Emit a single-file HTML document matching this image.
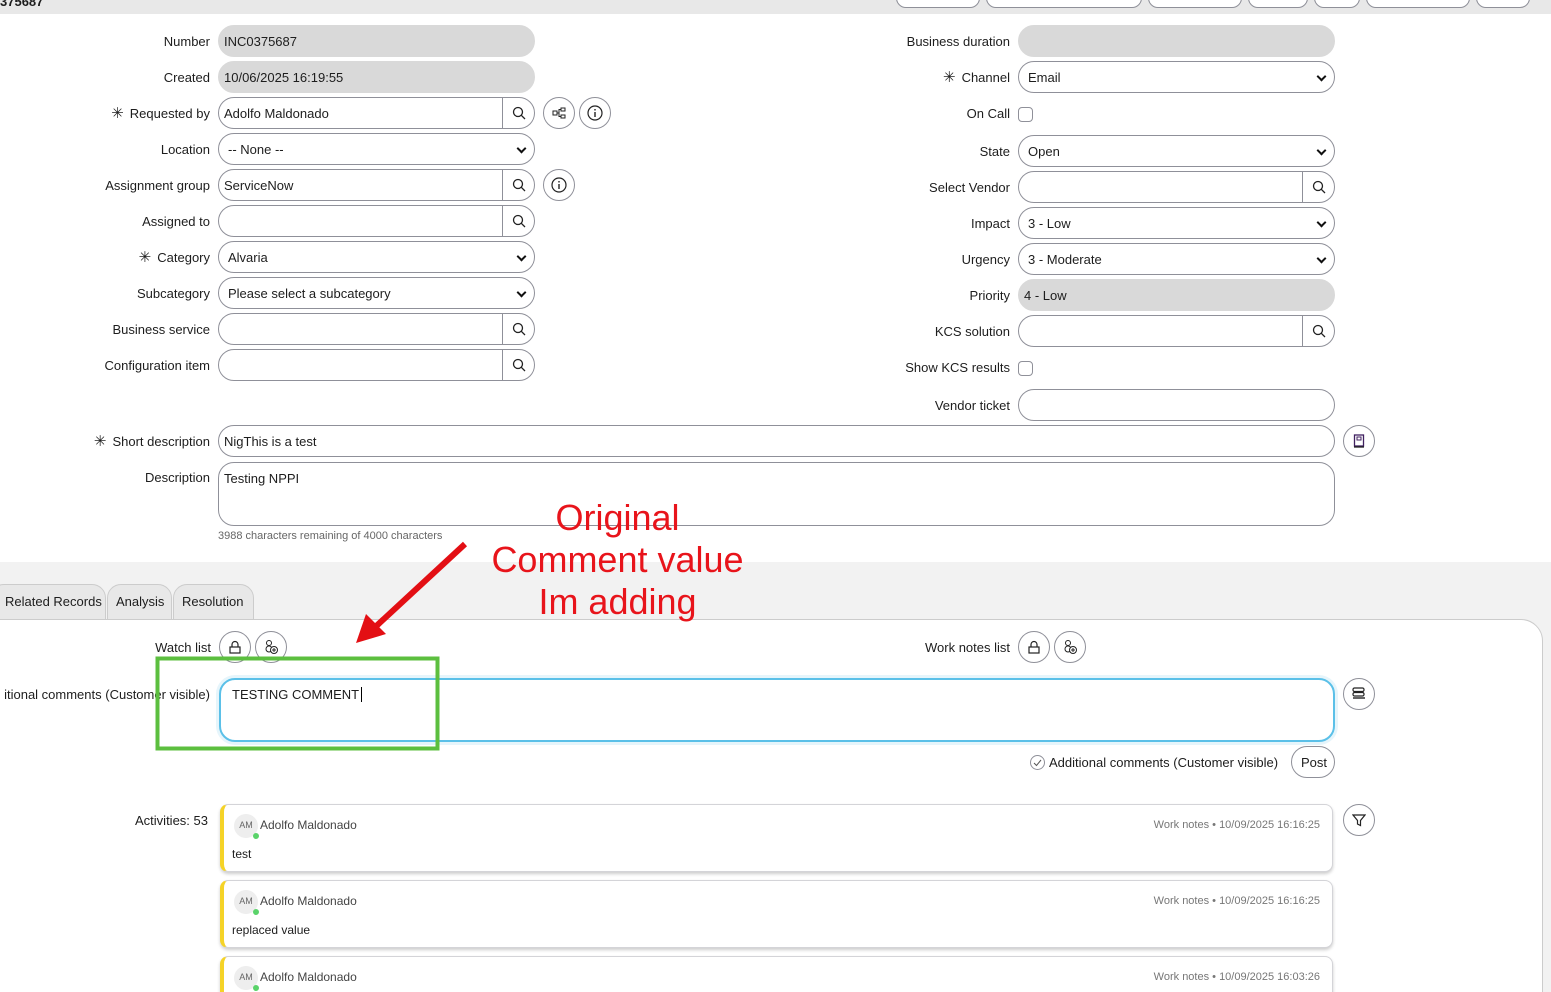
<!DOCTYPE html>
<html><head><meta charset="utf-8"><style>
*{box-sizing:border-box}
html,body{margin:0;width:1551px;height:992px;overflow:hidden}
body{background:#fff;font-family:"Liberation Sans",sans-serif;font-size:13px;color:#1d1d1d}
#w{position:relative;width:1551px;height:992px;overflow:hidden}
.a{position:absolute}
.lbl{position:absolute;text-align:right;white-space:nowrap;font-size:13px;line-height:16px}
.in{position:absolute;height:32px;border:1px solid #8f9099;border-radius:16px;background:#fff;padding:0 5px;line-height:31px;font-size:13px;white-space:nowrap}
.ro{background:#d9d9d9;border-color:#d9d9d9}
.sel::after{content:"";position:absolute;right:9px;top:11px;width:5px;height:5px;border-right:2px solid #111;border-bottom:2px solid #111;transform:rotate(45deg)}
.ref .mg{position:absolute;right:0;top:-1px;width:32px;height:32px;border-left:1px solid #8f9099}
.cb{position:absolute;width:15px;height:15px;border:1px solid #8f9099;border-radius:4px;background:#fff}
.cir{position:absolute;width:32px;height:32px;border:1px solid #8f9099;border-radius:50%;background:#fff}
.cir svg,.mg svg{position:absolute;left:50%;top:50%;transform:translate(-50%,-50%)}
.ast{font-size:15px;margin-right:6px}
.card{position:absolute;left:220px;width:1113px;height:68px;background:#fff;border:1px solid #d4d4d8;border-left:4px solid #f5d327;border-radius:8px;box-shadow:0 2px 3px rgba(0,0,0,.2)}
.av{position:absolute;left:10px;top:9px;width:24px;height:24px;border-radius:50%;background:#eee;font-size:9px;color:#666;text-align:center;line-height:22px}
.av::after{content:"";position:absolute;right:-1px;bottom:-1px;width:6px;height:6px;border-radius:50%;background:#5ad36a}
.nm{position:absolute;left:36px;top:13px;font-size:12px;color:#444}
.meta{position:absolute;right:12px;top:14px;font-size:11px;color:#777}
.tx{position:absolute;left:8px;top:42px;font-size:12px}
</style></head><body><div id="w">
<div class="a" style="left:0;top:0;width:1551px;height:14px;background:#e8e8e8"></div>
<div class="a" style="left:0;top:-6px;font-weight:bold;font-size:13px">375687</div>
<div class="a" style="left:896px;top:-12px;width:84px;height:20px;border:1px solid #8f9099;border-radius:10px;background:#fff"></div>
<div class="a" style="left:986px;top:-12px;width:156px;height:20px;border:1px solid #8f9099;border-radius:10px;background:#fff"></div>
<div class="a" style="left:1148px;top:-12px;width:94px;height:20px;border:1px solid #8f9099;border-radius:10px;background:#fff"></div>
<div class="a" style="left:1248px;top:-12px;width:60px;height:20px;border:1px solid #8f9099;border-radius:10px;background:#fff"></div>
<div class="a" style="left:1314px;top:-12px;width:46px;height:20px;border:1px solid #8f9099;border-radius:10px;background:#fff"></div>
<div class="a" style="left:1366px;top:-12px;width:104px;height:20px;border:1px solid #8f9099;border-radius:10px;background:#fff"></div>
<div class="a" style="left:1476px;top:-12px;width:54px;height:20px;border:1px solid #8f9099;border-radius:10px;background:#fff"></div>

<div class="lbl" style="right:1341px;top:34px">Number</div><div class="in ro" style="left:218px;top:25px;width:317px">INC0375687</div>
<div class="lbl" style="right:1341px;top:70px">Created</div><div class="in ro" style="left:218px;top:61px;width:317px">10/06/2025 16:19:55</div>
<div class="lbl" style="right:1341px;top:106px"><span class="ast">✳</span>Requested by</div><div class="in ref" style="left:218px;top:97px;width:317px">Adolfo Maldonado<div class="mg"><svg width="14" height="14"><circle cx="6" cy="6" r="4.5" fill="none" stroke="#222" stroke-width="1.3"/><path d="M9.3 9.3L13 13" stroke="#222" stroke-width="1.3"/></svg></div></div>
<div class="cir" style="left:543px;top:97px"><svg width="14" height="12"><rect x="1" y="4" width="4" height="4" fill="none" stroke="#222"/><rect x="9" y="1" width="4" height="3" fill="none" stroke="#222"/><rect x="9" y="8" width="4" height="3" fill="none" stroke="#222"/><path d="M5 6H7V2.5H9M7 6V9.5H9" fill="none" stroke="#222"/></svg></div>
<div class="cir" style="left:579px;top:97px"><svg width="16" height="16"><circle cx="8" cy="8" r="7" fill="none" stroke="#222" stroke-width="1.2"/><path d="M8 7V12M8 4V5.5" stroke="#222" stroke-width="1.4"/></svg></div>
<div class="lbl" style="right:1341px;top:142px">Location</div><div class="in sel" style="left:218px;top:133px;width:317px;padding-left:9px">-- None --</div>
<div class="lbl" style="right:1341px;top:178px">Assignment group</div><div class="in ref" style="left:218px;top:169px;width:317px">ServiceNow<div class="mg"><svg width="14" height="14"><circle cx="6" cy="6" r="4.5" fill="none" stroke="#222" stroke-width="1.3"/><path d="M9.3 9.3L13 13" stroke="#222" stroke-width="1.3"/></svg></div></div>
<div class="cir" style="left:543px;top:169px"><svg width="16" height="16"><circle cx="8" cy="8" r="7" fill="none" stroke="#222" stroke-width="1.2"/><path d="M8 7V12M8 4V5.5" stroke="#222" stroke-width="1.4"/></svg></div>
<div class="lbl" style="right:1341px;top:214px">Assigned to</div><div class="in ref" style="left:218px;top:205px;width:317px"><div class="mg"><svg width="14" height="14"><circle cx="6" cy="6" r="4.5" fill="none" stroke="#222" stroke-width="1.3"/><path d="M9.3 9.3L13 13" stroke="#222" stroke-width="1.3"/></svg></div></div>
<div class="lbl" style="right:1341px;top:250px"><span class="ast">✳</span>Category</div><div class="in sel" style="left:218px;top:241px;width:317px;padding-left:9px">Alvaria</div>
<div class="lbl" style="right:1341px;top:286px">Subcategory</div><div class="in sel" style="left:218px;top:277px;width:317px;padding-left:9px">Please select a subcategory</div>
<div class="lbl" style="right:1341px;top:322px">Business service</div><div class="in ref" style="left:218px;top:313px;width:317px"><div class="mg"><svg width="14" height="14"><circle cx="6" cy="6" r="4.5" fill="none" stroke="#222" stroke-width="1.3"/><path d="M9.3 9.3L13 13" stroke="#222" stroke-width="1.3"/></svg></div></div>
<div class="lbl" style="right:1341px;top:358px">Configuration item</div><div class="in ref" style="left:218px;top:349px;width:317px"><div class="mg"><svg width="14" height="14"><circle cx="6" cy="6" r="4.5" fill="none" stroke="#222" stroke-width="1.3"/><path d="M9.3 9.3L13 13" stroke="#222" stroke-width="1.3"/></svg></div></div>

<div class="lbl" style="right:541px;top:34px">Business duration</div><div class="in ro" style="left:1018px;top:25px;width:317px"></div>
<div class="lbl" style="right:541px;top:70px"><span class="ast">✳</span>Channel</div><div class="in sel" style="left:1018px;top:61px;width:317px;padding-left:9px">Email</div>
<div class="lbl" style="right:541px;top:106px">On Call</div><div class="cb" style="left:1018px;top:107px"></div>
<div class="lbl" style="right:541px;top:144px">State</div><div class="in sel" style="left:1018px;top:135px;width:317px;padding-left:9px">Open</div>
<div class="lbl" style="right:541px;top:180px">Select Vendor</div><div class="in ref" style="left:1018px;top:171px;width:317px"><div class="mg"><svg width="14" height="14"><circle cx="6" cy="6" r="4.5" fill="none" stroke="#222" stroke-width="1.3"/><path d="M9.3 9.3L13 13" stroke="#222" stroke-width="1.3"/></svg></div></div>
<div class="lbl" style="right:541px;top:216px">Impact</div><div class="in sel" style="left:1018px;top:207px;width:317px;padding-left:9px">3 - Low</div>
<div class="lbl" style="right:541px;top:252px">Urgency</div><div class="in sel" style="left:1018px;top:243px;width:317px;padding-left:9px">3 - Moderate</div>
<div class="lbl" style="right:541px;top:288px">Priority</div><div class="in ro" style="left:1018px;top:279px;width:317px">4 - Low</div>
<div class="lbl" style="right:541px;top:324px">KCS solution</div><div class="in ref" style="left:1018px;top:315px;width:317px"><div class="mg"><svg width="14" height="14"><circle cx="6" cy="6" r="4.5" fill="none" stroke="#222" stroke-width="1.3"/><path d="M9.3 9.3L13 13" stroke="#222" stroke-width="1.3"/></svg></div></div>
<div class="lbl" style="right:541px;top:360px">Show KCS results</div><div class="cb" style="left:1018px;top:361px"></div>
<div class="lbl" style="right:541px;top:398px">Vendor ticket</div><div class="in" style="left:1018px;top:389px;width:317px"></div>

<div class="lbl" style="right:1341px;top:434px"><span class="ast">✳</span>Short description</div><div class="in" style="left:218px;top:425px;width:1117px">NigThis is a test</div>
<div class="cir" style="left:1343px;top:425px"><svg width="12" height="14"><rect x="1.5" y="1" width="9" height="11" fill="none" stroke="#402060" stroke-width="1.3"/><rect x="4" y="3" width="4" height="3" fill="none" stroke="#402060"/><path d="M1 13H11" stroke="#222" stroke-width="1.3"/></svg></div>
<div class="lbl" style="right:1341px;top:470px">Description</div><div class="in" style="left:218px;top:462px;width:1117px;height:64px;line-height:16px;padding-top:8px">Testing NPPI</div>
<div class="a" style="left:218px;top:530px;font-size:11px;color:#666">3988 characters remaining of 4000 characters</div>

<div class="a" style="left:0;top:562px;width:1551px;height:430px;background:#f2f2f2"></div>
<div class="a" style="left:-10px;top:584px;width:116px;height:40px;background:#e8e8e8;border:1px solid #ccc;border-radius:14px 14px 0 0"></div>
<div class="a" style="left:107px;top:584px;width:65px;height:40px;background:#e8e8e8;border:1px solid #ccc;border-radius:14px 14px 0 0"></div>
<div class="a" style="left:173px;top:584px;width:81px;height:40px;background:#e8e8e8;border:1px solid #ccc;border-radius:14px 14px 0 0"></div>
<div class="a" style="left:5px;top:594px">Related Records</div>
<div class="a" style="left:116px;top:594px">Analysis</div>
<div class="a" style="left:182px;top:594px">Resolution</div>
<div class="a" style="left:-10px;top:619px;width:1553px;height:380px;background:#fff;border:1px solid #ccc;border-radius:0 22px 0 0"></div>

<div class="lbl" style="right:1340px;top:640px">Watch list</div>
<div class="cir" style="left:219px;top:631px"><svg width="14" height="14"><rect x="2" y="7" width="10" height="6" fill="none" stroke="#222" stroke-width="1.2"/><path d="M4 7V4.5a3 3 0 0 1 6 0V7" fill="none" stroke="#222" stroke-width="1.2"/></svg></div>
<div class="cir" style="left:255px;top:631px"><svg width="16" height="16"><circle cx="6" cy="4" r="2.5" fill="none" stroke="#222"/><circle cx="6" cy="10" r="3" fill="none" stroke="#222"/><circle cx="11" cy="11" r="3.5" fill="#fff" stroke="#222"/><path d="M11 9V13M9 11H13" stroke="#222"/></svg></div>
<div class="lbl" style="right:541px;top:640px">Work notes list</div>
<div class="cir" style="left:1018px;top:631px"><svg width="14" height="14"><rect x="2" y="7" width="10" height="6" fill="none" stroke="#222" stroke-width="1.2"/><path d="M4 7V4.5a3 3 0 0 1 6 0V7" fill="none" stroke="#222" stroke-width="1.2"/></svg></div>
<div class="cir" style="left:1054px;top:631px"><svg width="16" height="16"><circle cx="6" cy="4" r="2.5" fill="none" stroke="#222"/><circle cx="6" cy="10" r="3" fill="none" stroke="#222"/><circle cx="11" cy="11" r="3.5" fill="#fff" stroke="#222"/><path d="M11 9V13M9 11H13" stroke="#222"/></svg></div>

<div class="lbl" style="right:1341px;top:687px">itional comments (Customer visible)</div>
<div class="in" style="left:219px;top:678px;width:1116px;height:64px;border:2px solid #5bc0e8;box-shadow:0 0 0 3px #e6f5fb;line-height:16px;padding:7px 11px">TESTING COMMENT<span style="border-left:1px solid #000;margin-left:2px"></span></div>
<div class="cir" style="left:1343px;top:678px"><svg width="14" height="14"><rect x="1" y="1" width="11" height="3.5" rx="1.5" fill="none" stroke="#222" stroke-width="1.2"/><rect x="1" y="5.5" width="11" height="3.5" rx="1.5" fill="none" stroke="#222" stroke-width="1.2"/><path d="M1 11H13" stroke="#222" stroke-width="1.4"/></svg></div>
<div class="cb" style="left:1030px;top:755px;border-radius:50%"><svg width="13" height="13" style="position:absolute;left:0;top:0"><path d="M3 7l2.5 2.5L10 4" fill="none" stroke="#555"/></svg></div>
<div class="a" style="left:1049px;top:755px">Additional comments (Customer visible)</div>
<div class="in" style="left:1291px;top:746px;width:44px;height:32px;padding:0 9px">Post</div>

<div class="lbl" style="right:1343px;top:813px">Activities: 53</div>
<div class="cir" style="left:1343px;top:804px"><svg width="14" height="14"><path d="M1 2H13L8.5 7.5V12.5L5.5 11V7.5Z" fill="none" stroke="#222" stroke-width="1.2"/></svg></div>
<div class="card" style="top:804px"><div class="av">AM</div><div class="nm">Adolfo Maldonado</div><div class="meta">Work notes • 10/09/2025 16:16:25</div><div class="tx">test</div></div>
<div class="card" style="top:880px"><div class="av">AM</div><div class="nm">Adolfo Maldonado</div><div class="meta">Work notes • 10/09/2025 16:16:25</div><div class="tx">replaced value</div></div>
<div class="card" style="top:956px"><div class="av">AM</div><div class="nm">Adolfo Maldonado</div><div class="meta">Work notes • 10/09/2025 16:03:26</div></div>

<div class="a" style="left:460px;top:497px;width:315px;text-align:center;color:#e8141b;font-size:36px;line-height:42px">Original<br>Comment value<br>Im adding</div>
<svg class="a" style="left:0;top:0" width="1551" height="992"><path d="M465 544L372 630" stroke="#e30f14" stroke-width="6" fill="none"/><path d="M356 643L366 614L386 634Z" fill="#e30f14"/><rect x="157.5" y="658.5" width="280" height="90" fill="none" stroke="#5cbf3f" stroke-width="4"/></svg>
</div></body></html>
